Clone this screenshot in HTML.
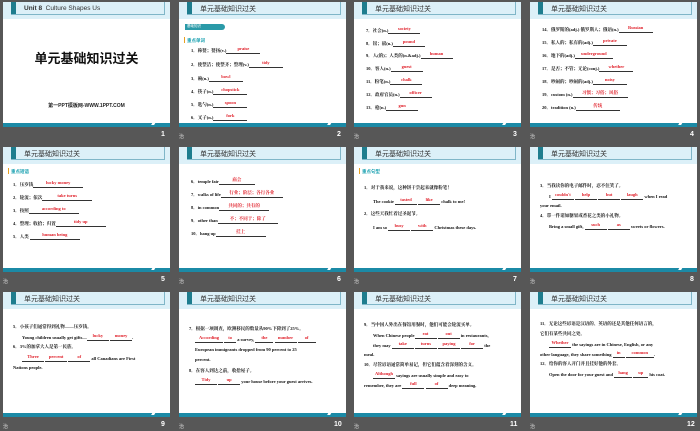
<!DOCTYPE html>
<html><head><meta charset="utf-8"><style>
body{margin:0;width:700px;height:431px;background:#575757;position:relative;overflow:hidden;font-family:"Liberation Serif","Noto Serif CJK SC",serif}
.s{position:absolute;width:167px;height:125px;background:#fff;overflow:hidden}
.h{position:absolute;left:0;top:0;width:167px;height:17px;background:#dcf0f8}
.hb{position:absolute;left:8px;top:0;width:153px;height:12px;border-right:1px solid #7fb6c8;border-bottom:1px solid #7fb6c8}
.sq{position:absolute;left:8px;top:0;width:5px;height:12px;background:#1e7d8e}
.t{position:absolute;left:21px;top:2px;font:7px "Liberation Sans","Noto Sans CJK SC",sans-serif;color:#333}
.f{position:absolute;left:0;top:121px;width:167px;height:4px;background:#1b8aa6}
.f2{position:absolute;left:149px;top:120px;width:3px;height:3px;background:#fff;transform:skewX(-30deg)}
.l{position:absolute;font-size:4.5px;font-weight:bold;color:#111;white-space:nowrap;line-height:6px}
.a{display:inline-block;border-bottom:0.6px solid #333;color:#e0202a;text-align:center;position:relative;height:6px;vertical-align:bottom}
.a i{font-style:normal;position:absolute;left:0;right:0;top:-1.5px}
.n{position:absolute;color:#fff;font:bold 7px "Liberation Sans",sans-serif}
.z{position:absolute;color:#ddd;font:5px "Noto Sans CJK SC",sans-serif}
.k{position:absolute;left:8px;font:bold 4.5px "Noto Sans CJK SC",sans-serif;color:#19a0b0}
.k:before{content:"";position:absolute;left:-3px;top:-1px;width:1px;height:6px;background:#e8a020}
</style></head><body>

<div class="z" style="left:179px;top:133px">治</div><div class="z" style="left:354px;top:133px">治</div><div class="z" style="left:530px;top:133px">治</div>
<div class="z" style="left:3px;top:278px">治</div><div class="z" style="left:179px;top:278px">治</div><div class="z" style="left:354px;top:278px">治</div><div class="z" style="left:530px;top:278px">治</div>
<div class="z" style="left:3px;top:423px">治</div><div class="z" style="left:179px;top:423px">治</div><div class="z" style="left:354px;top:423px">治</div><div class="z" style="left:530px;top:423px">治</div>

<!-- 1 -->
<div class="s" style="left:3px;top:2px">
<div class="h"></div><div class="hb"></div><div class="sq"></div>
<div class="t" style="font-weight:bold;font-size:6.5px;top:3px">Unit 8 &nbsp;<span style="font-weight:normal">Culture Shapes Us</span></div>
<div style="position:absolute;left:0;width:167px;top:46px;text-align:center;font:bold 13px 'Noto Sans CJK SC',sans-serif;color:#111">单元基础知识过关</div>
<div style="position:absolute;left:0;width:167px;top:100px;text-align:center;font:bold 5px 'Liberation Sans','Noto Sans CJK SC',sans-serif;color:#222">第一PPT模板网-WWW.1PPT.COM</div>
<div class="f"></div><div class="f2"></div></div>
<div class="n" style="left:161px;top:131px">1</div>

<!-- 2 -->
<div class="s" style="left:179px;top:2px">
<div class="h"></div><div class="hb"></div><div class="sq"></div><div class="t">单元基础知识过关</div>
<div style="position:absolute;left:6px;top:22px;width:38px;height:6px;background:#2a9aa8;border-radius:0 4px 4px 0;font:3.5px sans-serif;color:#fff;padding-left:2px">基础知识</div>
<div class="k" style="top:36px">重点单词</div>
<div class="l" style="left:12px;top:45px">1．称赞；赞扬(v.)<span class="a" style="width:34px"><i>praise</i></span></div>
<div class="l" style="left:12px;top:59px">2．使整洁；使整齐；整理(v.)<span class="a" style="width:34px"><i>tidy</i></span></div>
<div class="l" style="left:12px;top:73px">3．碗(n.)<span class="a" style="width:34px"><i>bowl</i></span></div>
<div class="l" style="left:12px;top:86px">4．筷子(n.)<span class="a" style="width:34px"><i>chopstick</i></span></div>
<div class="l" style="left:12px;top:99px">5．匙勺(n.)<span class="a" style="width:34px"><i>spoon</i></span></div>
<div class="l" style="left:12px;top:112px">6．叉子(n.)<span class="a" style="width:34px"><i>fork</i></span></div>
<div class="f"></div><div class="f2"></div></div>
<div class="n" style="left:337px;top:131px">2</div>

<!-- 3 -->
<div class="s" style="left:354px;top:2px">
<div class="h"></div><div class="hb"></div><div class="sq"></div><div class="t">单元基础知识过关</div>
<div class="l" style="left:12px;top:25px">7．社会(n.)<span class="a" style="width:32px"><i>society</i></span></div>
<div class="l" style="left:12px;top:38px">8．镑；磅(n.)<span class="a" style="width:32px"><i>pound</i></span></div>
<div class="l" style="left:12px;top:50px">9．人(的)；人类的(n.&amp;adj.)<span class="a" style="width:32px"><i>human</i></span></div>
<div class="l" style="left:12px;top:63px">10．客人(n.)<span class="a" style="width:32px"><i>guest</i></span></div>
<div class="l" style="left:12px;top:76px">11．粉笔(n.)<span class="a" style="width:32px"><i>chalk</i></span></div>
<div class="l" style="left:12px;top:89px">12．政府官员(n.)<span class="a" style="width:32px"><i>officer</i></span></div>
<div class="l" style="left:12px;top:102px">13．枪(n.)<span class="a" style="width:32px"><i>gun</i></span></div>
<div class="f"></div><div class="f2"></div></div>
<div class="n" style="left:513px;top:131px">3</div>

<!-- 4 -->
<div class="s" style="left:530px;top:2px">
<div class="h"></div><div class="hb"></div><div class="sq"></div><div class="t">单元基础知识过关</div>
<div class="l" style="left:12px;top:24px">14．俄罗斯的(adj.) 俄罗斯人；俄语(n.)<span class="a" style="width:34px"><i>Russian</i></span></div>
<div class="l" style="left:12px;top:37px">15．私人的；私有的(adj.)<span class="a" style="width:34px"><i>private</i></span></div>
<div class="l" style="left:12px;top:50px">16．地下的(adj.)<span class="a" style="width:38px"><i>underground</i></span></div>
<div class="l" style="left:12px;top:63px">17．是否；不管；无论(conj.)<span class="a" style="width:34px"><i>whether</i></span></div>
<div class="l" style="left:12px;top:76px">18．吵闹的；吵闹的(adj.)<span class="a" style="width:34px"><i>noisy</i></span></div>
<div class="l" style="left:12px;top:89px">19．custom (n.)<span class="a" style="width:55px"><i>习惯；习俗；风俗</i></span></div>
<div class="l" style="left:12px;top:102px">20．tradition (n.)<span class="a" style="width:44px"><i>传统</i></span></div>
<div class="f"></div><div class="f2"></div></div>
<div class="n" style="left:690px;top:131px">4</div>

<!-- 5 -->
<div class="s" style="left:3px;top:147px">
<div class="h"></div><div class="hb"></div><div class="sq"></div><div class="t">单元基础知识过关</div>
<div class="k" style="top:22px">重点短语</div>
<div class="l" style="left:10px;top:34px">1．压岁钱<span class="a" style="width:50px"><i>lucky money</i></span></div>
<div class="l" style="left:10px;top:47px">2．轮流；依次<span class="a" style="width:50px"><i>take turns</i></span></div>
<div class="l" style="left:10px;top:60px">3．按照<span class="a" style="width:50px"><i>according to</i></span></div>
<div class="l" style="left:10px;top:73px">4．整理；收拾；归置<span class="a" style="width:50px"><i>tidy up</i></span></div>
<div class="l" style="left:10px;top:86px">5．人类 <span class="a" style="width:50px"><i>human being</i></span></div>
<div class="f"></div><div class="f2"></div></div>
<div class="n" style="left:161px;top:276px">5</div>

<!-- 6 -->
<div class="s" style="left:179px;top:147px">
<div class="h"></div><div class="hb"></div><div class="sq"></div><div class="t">单元基础知识过关</div>
<div class="l" style="left:12px;top:31px">6．temple fair<span class="a" style="width:36px"><i>庙会</i></span></div>
<div class="l" style="left:12px;top:44px">7．walks of life<span class="a" style="width:62px"><i>行业；阶层；各行各业</i></span></div>
<div class="l" style="left:12px;top:57px">8．in common<span class="a" style="width:50px"><i>共同的；共有的</i></span></div>
<div class="l" style="left:12px;top:70px">9．other than<span class="a" style="width:60px"><i>不；不同于；除了</i></span></div>
<div class="l" style="left:12px;top:83px">10．hang up<span class="a" style="width:50px"><i>挂上</i></span></div>
<div class="f"></div><div class="f2"></div></div>
<div class="n" style="left:337px;top:276px">6</div>

<!-- 7 -->
<div class="s" style="left:354px;top:147px">
<div class="h"></div><div class="hb"></div><div class="sq"></div><div class="t">单元基础知识过关</div>
<div class="k" style="top:22px">重点句型</div>
<div class="l" style="left:10px;top:38px">1．对于我来说，这种饼干尝起来就像粉笔！</div>
<div class="l" style="left:19px;top:51px">The cookie <span class="a" style="width:22px"><i>tasted</i></span> <span class="a" style="width:22px"><i>like</i></span> chalk to me!</div>
<div class="l" style="left:10px;top:64px">2．这些天我忙着过圣诞节。</div>
<div class="l" style="left:19px;top:77px">I am so <span class="a" style="width:22px"><i>busy</i></span> <span class="a" style="width:22px"><i>with</i></span> Christmas these days.</div>
<div class="f"></div><div class="f2"></div></div>
<div class="n" style="left:513px;top:276px">7</div>

<!-- 8 -->
<div class="s" style="left:530px;top:147px">
<div class="h"></div><div class="hb"></div><div class="sq"></div><div class="t">单元基础知识过关</div>
<div class="l" style="left:10px;top:36px">3．当我读你的电子邮件时，忍不住笑了。</div>
<div class="l" style="left:19px;top:46px">I <span class="a" style="width:22px"><i>couldn't</i></span> <span class="a" style="width:22px"><i>help</i></span> <span class="a" style="width:22px"><i>but</i></span> <span class="a" style="width:22px"><i>laugh</i></span> when I read</div>
<div class="l" style="left:10px;top:56px">your email.</div>
<div class="l" style="left:10px;top:66px">4．带一件诸如糖果或香花之类的小礼物。</div>
<div class="l" style="left:19px;top:76px">Bring a small gift, <span class="a" style="width:22px"><i>such</i></span> <span class="a" style="width:22px"><i>as</i></span> sweets or flowers.</div>
<div class="f"></div><div class="f2"></div></div>
<div class="n" style="left:690px;top:276px">8</div>

<!-- 9 -->
<div class="s" style="left:3px;top:292px">
<div class="h"></div><div class="hb"></div><div class="sq"></div><div class="t">单元基础知识过关</div>
<div class="l" style="left:10px;top:32px">5．小孩子们通常得到礼物——压岁钱。</div>
<div class="l" style="left:19px;top:42px">Young children usually get gifts—<span class="a" style="width:22px"><i>lucky</i></span> <span class="a" style="width:22px"><i>money</i></span>.</div>
<div class="l" style="left:10px;top:52px">6．3%的加拿大人是第一民族。</div>
<div class="l" style="left:19px;top:63px"><span class="a" style="width:22px"><i>Three</i></span> <span class="a" style="width:22px"><i>percent</i></span> <span class="a" style="width:22px"><i>of</i></span> all Canadians are First</div>
<div class="l" style="left:10px;top:73px">Nations people.</div>
<div class="f"></div><div class="f2"></div></div>
<div class="n" style="left:161px;top:421px">9</div>

<!-- 10 -->
<div class="s" style="left:179px;top:292px">
<div class="h"></div><div class="hb"></div><div class="sq"></div><div class="t">单元基础知识过关</div>
<div class="l" style="left:10px;top:34px">7．根据一项调查，欧洲移民的数量从90%下降到了25%。</div>
<div class="l" style="left:16px;top:44px"><span class="a" style="width:28px"><i>According</i></span> <span class="a" style="width:12px"><i>to</i></span> a survey, <span class="a" style="width:18px"><i>the</i></span> <span class="a" style="width:22px"><i>number</i></span> <span class="a" style="width:18px"><i>of</i></span></div>
<div class="l" style="left:16px;top:55px">European immigrants dropped from 90 percent to 25</div>
<div class="l" style="left:16px;top:65px">percent.</div>
<div class="l" style="left:10px;top:76px">8．在客人到达之前，收拾屋子。</div>
<div class="l" style="left:16px;top:86px"><span class="a" style="width:22px"><i>Tidy</i></span> <span class="a" style="width:22px"><i>up</i></span> your house before your guest arrives.</div>
<div class="f"></div><div class="f2"></div></div>
<div class="n" style="left:334px;top:421px">10</div>

<!-- 11 -->
<div class="s" style="left:354px;top:292px">
<div class="h"></div><div class="hb"></div><div class="sq"></div><div class="t">单元基础知识过关</div>
<div class="l" style="left:10px;top:30px">9．当中国人外出在餐馆用餐时，他们可能会轮流买单。</div>
<div class="l" style="left:19px;top:40px">When Chinese people<span class="a" style="width:22px"><i>eat</i></span> <span class="a" style="width:22px"><i>out</i></span> in restaurants,</div>
<div class="l" style="left:19px;top:50px">they may <span class="a" style="width:22px"><i>take</i></span> <span class="a" style="width:22px"><i>turns</i></span> <span class="a" style="width:22px"><i>paying</i></span> <span class="a" style="width:22px"><i>for</i></span> the</div>
<div class="l" style="left:10px;top:60px">meal.</div>
<div class="l" style="left:10px;top:70px">10．尽管谚语通常简单易记，但它们蕴含着深刻的含义。</div>
<div class="l" style="left:19px;top:80px"><span class="a" style="width:22px"><i>Although</i></span> sayings are usually simple and easy to</div>
<div class="l" style="left:10px;top:90px">remember, they are <span class="a" style="width:22px"><i>full</i></span> <span class="a" style="width:22px"><i>of</i></span> deep meaning.</div>
<div class="f"></div><div class="f2"></div></div>
<div class="n" style="left:510px;top:421px">11</div>

<!-- 12 -->
<div class="s" style="left:530px;top:292px">
<div class="h"></div><div class="hb"></div><div class="sq"></div><div class="t">单元基础知识过关</div>
<div class="l" style="left:10px;top:29px">11．无论这些谚语是汉语的、英语的还是其他任何语言的，</div>
<div class="l" style="left:10px;top:39px">它们有某些共同之处。</div>
<div class="l" style="left:19px;top:49px"><span class="a" style="width:22px"><i>Whether</i></span> the sayings are in Chinese, English, or any</div>
<div class="l" style="left:10px;top:59px">other language, they share something <span class="a" style="width:12px"><i>in</i></span> <span class="a" style="width:28px"><i>common</i></span>.</div>
<div class="l" style="left:10px;top:69px">12．给你的客人开门并且挂好他的外套。</div>
<div class="l" style="left:19px;top:79px">Open the door for your guest and <span class="a" style="width:18px"><i>hang</i></span> <span class="a" style="width:15px"><i>up</i></span> his coat.</div>
<div class="f"></div><div class="f2"></div></div>
<div class="n" style="left:687px;top:421px">12</div>

</body></html>
